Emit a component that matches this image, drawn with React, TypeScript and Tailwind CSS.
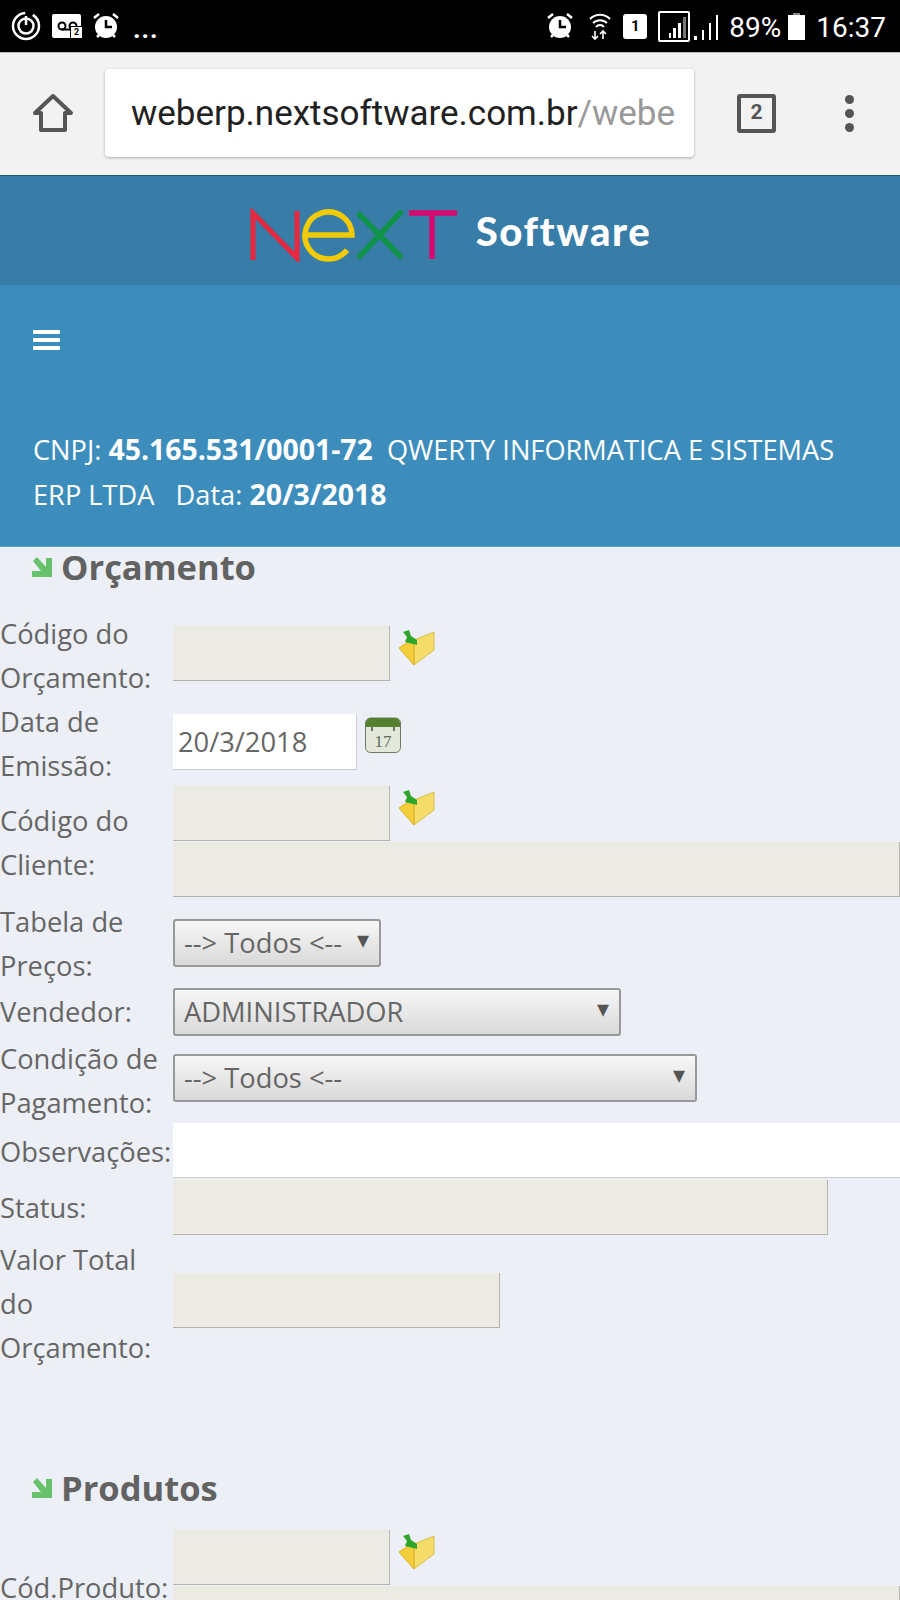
const sans = "font-['Open_Sans','Noto_Sans',sans-serif]";

const Lookup = () => (
  <svg width="38" height="40" viewBox="0 0 38 40" className="shrink-0">
    <path d="M16 14 L36 6 L36 24 L16 39 Z" fill="#f3dc6a" stroke="#d9c04a" strokeWidth="1" />
    <path d="M1 22 L16 12 L16 39 Z" fill="#f4cf3a" stroke="#dcae22" strokeWidth="1" />
    <path d="M5 6 L11 4 L13 10 L19 14 L19 19 L7 16 L9 11 Z" fill="#2fa52c" />
  </svg>
);

const Calendar = () => (
  <svg width="36" height="36" viewBox="0 0 36 36" className="shrink-0">
    <rect x="0.5" y="1" width="35" height="34.5" rx="5" fill="#e3e8da" stroke="#6b7a64" />
    <path d="M1 6 a5 5 0 0 1 5 -5 h24 a5 5 0 0 1 5 5 v4 h-34 z" fill="#55802f" />
    <rect x="6" y="9" width="2" height="5" fill="#6b7a5a" />
    <rect x="28" y="9" width="2" height="5" fill="#6b7a5a" />
    <text x="18" y="30" textAnchor="middle" fontSize="17" fontFamily="Liberation Serif" fill="#5c6b5a">17</text>
  </svg>
);

const Arrow = () => (
  <svg width="20" height="20" viewBox="0 0 20 20" className="shrink-0">
    <path d="M0 20 V14 H9 L1 4 L5 0 L14 10 V1 H20 V20 Z" fill="#67c26b" />
  </svg>
);

const ReadOnly = ({ w }: { w: string }) => (
  <div className={`h-[55px] ${w} bg-[#ebebe4] border-r border-b border-[#b4b4ac]`} />
);

const Select = ({ w, text }: { w: string; text: string }) => (
  <div className={`h-[48px] ${w} flex items-center justify-between pl-[9px] pr-[10px] rounded-[3px] border-2 border-[#999] bg-gradient-to-b from-[#f7f7f7] to-[#d9d9d9] text-[27.3px] text-[#666]`}>
    <span className="whitespace-nowrap">{text}</span>
    <span className="text-[24px] leading-none text-[#555] -mt-2 ml-2">▾</span>
  </div>
);

const Heading = ({ text }: { text: string }) => (
  <div className="flex items-center pl-[32px] gap-[9px]">
    <Arrow />
    <h2 className="text-[34.5px] font-bold text-[#626262] leading-[44px]">{text}</h2>
  </div>
);

export default function App() {
  return (
    <div className={`w-[900px] h-[1600px] overflow-hidden bg-[#eceff5] ${sans}`}>
      {/* android status bar */}
      <div className="h-[52px] bg-black flex items-center justify-between pl-[11px] pr-[14px] text-white font-['Roboto',sans-serif]">
        <div className="flex items-center gap-[11px]">
          <svg width="30" height="30" viewBox="0 0 30 30" fill="none" stroke="white">
            <circle cx="15" cy="15" r="13" strokeWidth="2.5" strokeDasharray="60 8" />
            <circle cx="15" cy="15" r="7.5" strokeWidth="2.5" />
            <path d="M15 5 V14" strokeWidth="2.5" />
          </svg>
          <div className="relative w-[29px] h-[24px] bg-white rounded-[2px]">
            <svg width="24" height="14" viewBox="0 0 24 14" fill="none" stroke="black" strokeWidth="2" className="absolute left-[5px] top-[5px]">
              <circle cx="5" cy="7" r="3.5" />
              <circle cx="16" cy="7" r="3.5" />
              <path d="M5 10.5 H16" />
            </svg>
            <div className="absolute -right-[2px] -bottom-[1px] w-[13px] h-[13px] bg-white border border-black text-black text-[9px] leading-[11px] text-center font-bold">2</div>
          </div>
          <AlarmIcon />
          <span className="ml-[2px] text-[26px] font-bold tracking-[1px] mt-[6px] leading-none">...</span>
        </div>
        <div className="flex items-center">
          <AlarmIcon />
          <svg width="24" height="30" viewBox="0 0 24 30" fill="none" stroke="white" strokeWidth="2" className="ml-[14px]">
            <path d="M2 8 a14 14 0 0 1 20 0 M5 12 a10 10 0 0 1 14 0 M8 16 a5 5 0 0 1 8 0" />
            <path d="M7 20 V28 M4 25 L7 28 L10 25 M15 28 V20 M12 23 L15 20 L18 23" strokeWidth="1.6" />
          </svg>
          <div className="ml-[11px] w-[24px] h-[25px] bg-white rounded-[3px] text-black text-[15px] leading-[25px] text-center font-bold">1</div>
          <div className="ml-[11px] w-[32px] h-[31px] border-2 border-white rounded-[2px] flex items-end justify-end gap-[2px] p-[2px]">
            <div className="w-[2px] h-[5px] bg-white" />
            <div className="w-[3px] h-[10px] bg-white" />
            <div className="w-[3px] h-[15px] bg-white" />
            <div className="w-[3px] h-[21px] bg-[#777]" />
          </div>
          <div className="ml-[4px] flex items-end gap-[5px] h-[27px]">
            <div className="w-[3px] h-[4px] bg-white" />
            <div className="w-[2px] h-[10px] bg-white" />
            <div className="w-[2px] h-[17px] bg-white" />
            <div className="w-[2px] h-[25px] bg-white" />
          </div>
          <span className="ml-[11px] mt-[3px] text-[28px] leading-none">89%</span>
          <div className="ml-[7px] mt-[2px] relative w-[17px] h-[25px] bg-white">
            <div className="absolute -top-[2px] left-[5px] w-[7px] h-[2px] bg-[#888]" />
          </div>
          <span className="ml-[11px] mt-[3px] text-[28px] leading-none">16:37</span>
        </div>
      </div>

      {/* chrome toolbar */}
      <div className="h-[123px] bg-[#f2f2f2] border-t border-[#bbb] flex items-center pb-[2px]">
        <div className="w-[105px] flex justify-center">
          <svg width="42" height="42" viewBox="0 0 42 42" fill="none" stroke="#555" strokeWidth="4" strokeLinejoin="round">
            <path d="M3 21 L21 4 L39 21 H33 V38 H9 V21 Z" />
          </svg>
        </div>
        <div className="w-[589px] h-[88px] bg-white rounded-[4px] shadow-[0_1px_3px_rgba(0,0,0,0.3)] flex items-center pl-[26px] pt-[3px] overflow-hidden whitespace-nowrap font-['Roboto',sans-serif] text-[35px] text-[#212121]">
          weberp.nextsoftware.com.br<span className="text-[#999]">/webe</span>
        </div>
        <div className="flex-1 flex items-center pl-[43px]">
          <div className="w-[39px] h-[39px] border-[4px] border-[#555] rounded-[3px] flex items-center justify-center font-['Roboto',sans-serif] font-bold text-[21px] text-[#555]">2</div>
          <div className="ml-[69px] flex flex-col gap-[5px]">
            <div className="w-[9px] h-[9px] rounded-full bg-[#555]" />
            <div className="w-[9px] h-[9px] rounded-full bg-[#555]" />
            <div className="w-[9px] h-[9px] rounded-full bg-[#555]" />
          </div>
        </div>
      </div>

      {/* logo */}
      <div className="h-[110px] bg-[#387ca8] border-t border-[#1f5a80] flex items-center justify-center">
        <svg width="210" height="54" viewBox="0 0 210 54" fill="none" strokeWidth="5.5" className="mt-[8px]">
          <path d="M4 52 V5 L48 50 V3" stroke="#e8283c" strokeWidth="5" />
          <path d="M57 27 H103 A23.5 23.5 0 1 0 98 42" stroke="#f2cb05" />
          <path d="M109 5 L153 50 M153 3 L109 50" stroke="#0f9347" />
          <path d="M160 5 H208 M183 5 V51" stroke="#d8096e" />
        </svg>
        <span className="ml-[17px] font-['Lato',sans-serif] font-black text-[40px] leading-none text-white tracking-[1.6px]">Software</span>
      </div>

      {/* nav */}
      <div className="h-[262px] bg-[#3c8dbc] border-b border-[#5aa0cc] pl-[33px] pr-[40px]">
        <div className="pt-[45px] flex flex-col gap-[4px] w-[27px]">
          <div className="h-[4px] bg-white rounded-[1px]" />
          <div className="h-[4px] bg-white rounded-[1px]" />
          <div className="h-[4px] bg-white rounded-[1px]" />
        </div>
        <p className="mt-[77px] text-[27.2px] leading-[44px] text-white">
          CNPJ: <b className="text-[28.4px]">45.165.531/0001-72</b>&nbsp; QWERTY INFORMATICA E SISTEMAS ERP LTDA &nbsp; Data: <b className="text-[28.4px]">20/3/2018</b>
        </p>
      </div>

      {/* form */}
      <div className="-mt-[2px] text-[27.3px] leading-[44px] text-[#666]">
        <Heading text="Orçamento" />
        <div className="mt-[23px] grid grid-cols-[173px_1fr]">
          <div>Código do Orçamento:</div>
          <div className="pt-[14px] flex items-start gap-[8px]">
            <ReadOnly w="w-[217px]" />
            <Lookup />
          </div>
          <div>Data de Emissão:</div>
          <div className="pt-[14px] flex items-start gap-[8px]">
            <div className="h-[56px] w-[184px] bg-white border-r border-b border-[#ccc] pl-[5px] flex items-center">20/3/2018</div>
            <div className="mt-[3px]"><Calendar /></div>
          </div>
          <div className="pt-[11px]">Código do Cliente:</div>
          <div className="-mt-[2px] mb-[3px]">
            <div className="flex items-start gap-[8px]">
              <ReadOnly w="w-[217px]" />
              <Lookup />
            </div>
            <div className="mt-[1px]"><ReadOnly w="w-full" /></div>
          </div>
          <div>Tabela de Preços:</div>
          <div className="pt-[19px]"><Select w="w-[208px]" text="--> Todos <--" /></div>
          <div className="flex items-center">Vendedor:</div>
          <div><Select w="w-[448px]" text="ADMINISTRADOR" /></div>
          <div className="mt-[1px] w-[170px]">Condição de Pagamento:</div>
          <div className="pt-[18px]"><Select w="w-[524px]" text="--> Todos <--" /></div>
          <div className="mt-[5px] whitespace-nowrap">Observações:</div>
          <div className="-mt-[2px]"><div className="h-[55px] w-full bg-white border-b border-[#ccc]" /></div>
          <div className="mt-[2px] flex items-center">Status:</div>
          <div className="mt-[2px]"><ReadOnly w="w-[655px]" /></div>
          <div className="pt-[3px]">Valor Total do Orçamento:</div>
          <div className="pt-[38px]"><ReadOnly w="w-[327px]" /></div>
        </div>
        <div className="mt-[96px]">
          <Heading text="Produtos" />
        </div>
        <div className="mt-[20px] grid grid-cols-[173px_1fr]">
          <div className="pt-[36px] whitespace-nowrap">Cód.Produto:</div>
          <div>
            <div className="flex items-start gap-[8px]">
              <ReadOnly w="w-[217px]" />
              <Lookup />
            </div>
            <div className="mt-[1px]"><ReadOnly w="w-full" /></div>
          </div>
        </div>
      </div>
    </div>
  );
}

function AlarmIcon() {
  return (
    <svg width="28" height="28" viewBox="0 0 28 28">
      <circle cx="14" cy="15" r="11" fill="white" />
      <path d="M14 8 V15 H20" fill="none" stroke="black" strokeWidth="2.5" />
      <path d="M2 6 L7 2 M26 6 L21 2 M5 25 L7 23 M23 25 L21 23" stroke="white" strokeWidth="2.5" />
    </svg>
  );
}
